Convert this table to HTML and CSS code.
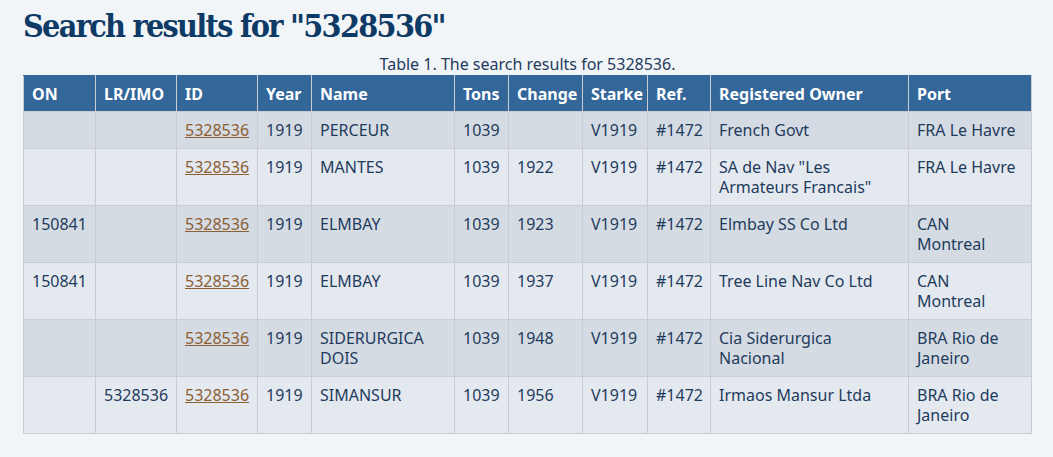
FILE: index.html
```html
<!DOCTYPE html>
<html lang="en">
<head>
<meta charset="utf-8">
<title>Search results</title>
<link rel="stylesheet" href="styles.css">
</head>
<body>
<main class="page">
  <h1 class="title">Search results for "5328536"</h1>
  <table class="results">
    <caption class="caption">Table 1. The search results for 5328536.</caption>
    <colgroup>
      <col class="c-on"><col class="c-lr"><col class="c-id"><col class="c-year"><col class="c-name"><col class="c-tons"><col class="c-change"><col class="c-starke"><col class="c-ref"><col class="c-owner"><col class="c-port">
    </colgroup>
    <thead>
      <tr><th>ON</th><th>LR/IMO</th><th>ID</th><th>Year</th><th>Name</th><th>Tons</th><th>Change</th><th>Starke</th><th>Ref.</th><th>Registered Owner</th><th>Port</th></tr>
    </thead>
    <tbody>
      <tr><td></td><td></td><td><a href="#">5328536</a></td><td>1919</td><td>PERCEUR</td><td>1039</td><td></td><td>V1919</td><td>#1472</td><td>French Govt</td><td>FRA Le Havre</td></tr>
      <tr><td></td><td></td><td><a href="#">5328536</a></td><td>1919</td><td>MANTES</td><td>1039</td><td>1922</td><td>V1919</td><td>#1472</td><td>SA de Nav "Les Armateurs Francais"</td><td>FRA Le Havre</td></tr>
      <tr><td>150841</td><td></td><td><a href="#">5328536</a></td><td>1919</td><td>ELMBAY</td><td>1039</td><td>1923</td><td>V1919</td><td>#1472</td><td>Elmbay SS Co Ltd</td><td>CAN Montreal</td></tr>
      <tr><td>150841</td><td></td><td><a href="#">5328536</a></td><td>1919</td><td>ELMBAY</td><td>1039</td><td>1937</td><td>V1919</td><td>#1472</td><td>Tree Line Nav Co Ltd</td><td>CAN Montreal</td></tr>
      <tr><td></td><td></td><td><a href="#">5328536</a></td><td>1919</td><td>SIDERURGICA DOIS</td><td>1039</td><td>1948</td><td>V1919</td><td>#1472</td><td>Cia Siderurgica Nacional</td><td>BRA Rio de Janeiro</td></tr>
      <tr><td></td><td>5328536</td><td><a href="#">5328536</a></td><td>1919</td><td>SIMANSUR</td><td>1039</td><td>1956</td><td>V1919</td><td>#1472</td><td>Irmaos Mansur Ltda</td><td>BRA Rio de Janeiro</td></tr>
    </tbody>
  </table>
</main>
</body>
</html>
```
FILE: styles.css
```css
html, body {
  margin: 0;
  padding: 0;
  background: #f2f5f8;
}
body {
  font-family: "Noto Sans", "Open Sans", sans-serif;
  color: #1f3b5c;
  font-size: 16px;
}
.page {
  padding: 6px 23px 0 23px;
}
.title {
  font-family: "DejaVu Serif Condensed", "DejaVu Serif", serif;
  font-weight: bold;
  font-size: 32px;
  letter-spacing: -1.7px;
  line-height: 40px;
  color: #0e3a66;
  margin: 0 0 8px 0;
}
.results {
  border-collapse: collapse;
  table-layout: fixed;
  width: 1008px;
}
.caption {
  font-size: 16px;
  line-height: 20px;
  padding-bottom: 1px;
  color: #1f3b5c;
}
.c-on { width: 72px; }
.c-lr { width: 81px; }
.c-id { width: 81px; }
.c-year { width: 54px; }
.c-name { width: 143px; }
.c-tons { width: 54px; }
.c-change { width: 74px; }
.c-starke { width: 65px; }
.c-ref { width: 63px; }
.c-owner { width: 198px; }
.c-port { width: 123px; }
.results th {
  background: #336699;
  color: #ffffff;
  font-weight: bold;
  text-align: left;
  padding: 8px 8px 7px 8px;
  line-height: 20px;
  border: 1px solid #c9cdd2;
  border-top-color: #336699;
}
.results td {
  padding: 8px 10px 8px 8px;
  line-height: 20px;
  vertical-align: top;
  border: 1px solid #c9cdd2;
}
.results tbody tr:nth-child(odd) td { background: #d5dbe3; }
.results tbody tr:nth-child(even) td { background: #e4e9f0; }
.results a {
  color: #8c5e33;
  text-decoration: underline;
}
```
